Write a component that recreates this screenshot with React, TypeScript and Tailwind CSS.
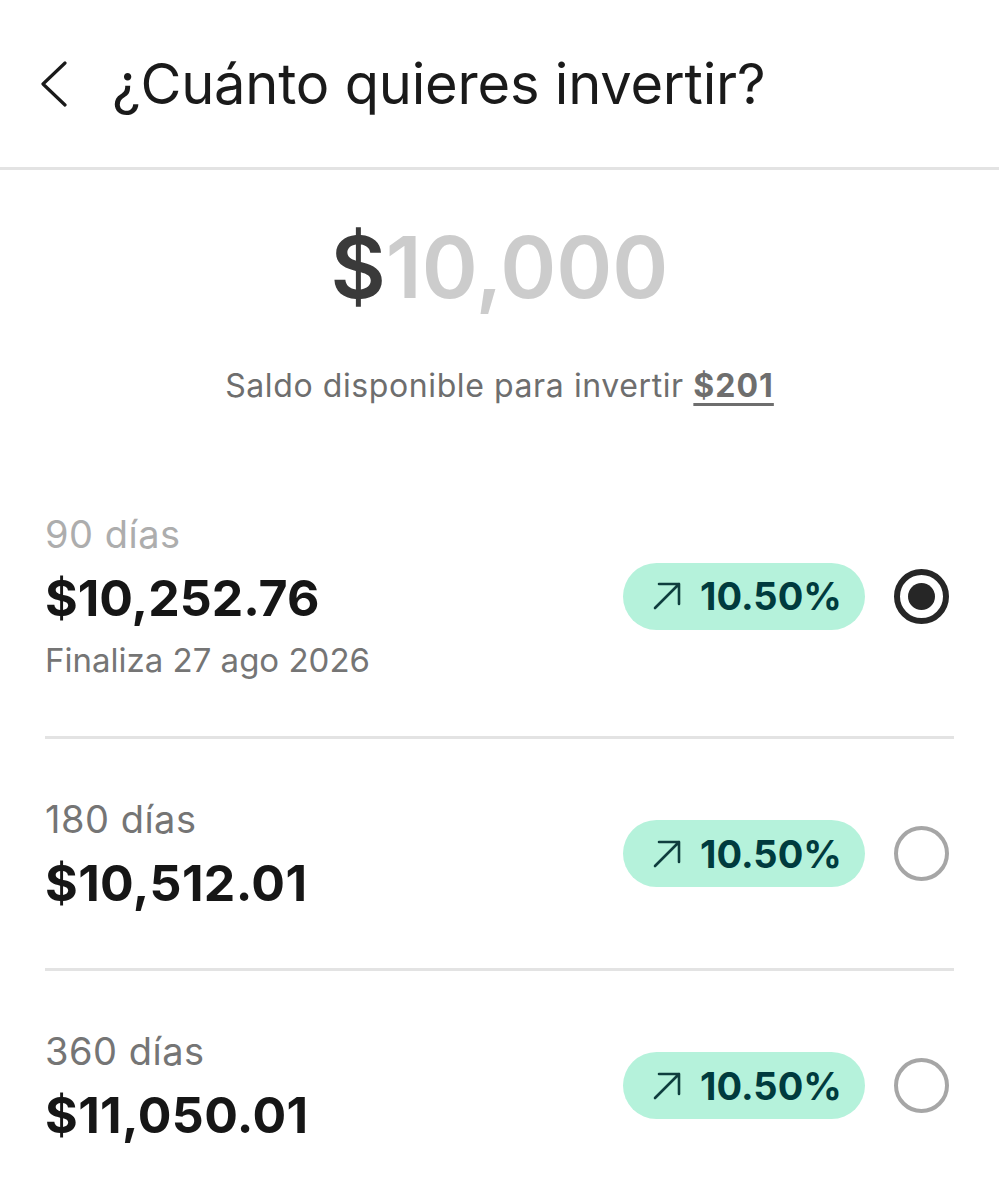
const font = { fontFamily: 'Inter, sans-serif' };

const Badge = () => (
  <div className="flex h-[67px] w-[242px] items-center rounded-full bg-[#b5f2db] pl-[29px]">
    <svg width="30" height="30" viewBox="0 0 30 30" fill="none" stroke="#0f3d3e" strokeWidth="2.6" strokeLinecap="round" strokeLinejoin="round">
      <path d="M3 27 L27 3 M7 3 H27 V23" />
    </svg>
    <span className="ml-[18px] text-[38px] leading-none font-bold text-[#003b3e]">10.50%</span>
  </div>
);

const Radio = ({ checked }: { checked?: boolean }) =>
  checked ? (
    <div className="flex h-[55px] w-[55px] items-center justify-center rounded-full border-[6px] border-[#262626]">
      <div className="h-[27px] w-[27px] rounded-full bg-[#262626]" />
    </div>
  ) : (
    <div className="h-[55px] w-[55px] rounded-full border-[4px] border-[#a6a6a6]" />
  );

interface RowProps {
  days: string;
  amount: string;
  ends?: string;
  checked?: boolean;
  muted?: boolean;
  className: string;
}

const Row = ({ days, amount, ends, checked, muted, className }: RowProps) => (
  <div className={`flex items-center justify-between ${className}`}>
    <div>
      <div className={`text-[38px] leading-[44px] tracking-[0.5px] ${muted ? 'text-[#adadad]' : 'text-[#757575]'}`}>{days}</div>
      <div className={`mt-[14px] text-[50px] leading-[56px] font-bold text-[#161616] ${ends ? '' : 'tracking-[0.4px]'}`}>{amount}</div>
      {ends && <div className="mt-[14px] text-[33px] leading-[40px] text-[#757575]">{ends}</div>}
    </div>
    <div className="flex items-center gap-[29px] pr-[5px]">
      <Badge />
      <Radio checked={checked} />
    </div>
  </div>
);

export default function App() {
  return (
    <div className="h-[1200px] w-[999px] overflow-hidden bg-white" style={font}>
      <header className="flex h-[170px] items-center border-b-[3px] border-[#e3e3e3]">
        <svg className="ml-[40px]" width="28" height="46" viewBox="0 0 28 46" fill="none" stroke="#1a1a1a" strokeWidth="3.2" strokeLinecap="round" strokeLinejoin="round">
          <path d="M25 2 L3 23 L25 44" />
        </svg>
        <h1 className="ml-[44px] text-[56px] leading-none font-normal tracking-[-0.2px] text-[#1a1a1a]">¿Cuánto quieres invertir?</h1>
      </header>
      <div className="mt-[48px] text-center text-[85px] leading-[100px] font-semibold text-[#cccccc]">
        <span className="text-[#3a3a3a]">$</span>10,000
      </div>
      <p className="mt-[48px] text-center text-[32px] leading-[40px] tracking-[0.6px] text-[#6e6e6e]">
        Saldo disponible para invertir <span className="font-bold tracking-[1px] underline underline-offset-[6px]">$201</span>
      </p>
      <div className="mx-[45px] mt-[50px]">
        <Row days="90 días" amount="$10,252.76" ends="Finaliza 27 ago 2026" checked muted className="h-[283px] border-b-[3px] border-[#e3e3e3]" />
        <Row days="180 días" amount="$10,512.01" className="h-[232px] border-b-[3px] border-[#e3e3e3]" />
        <Row days="360 días" amount="$11,050.01" className="h-[229px]" />
      </div>
    </div>
  );
}
